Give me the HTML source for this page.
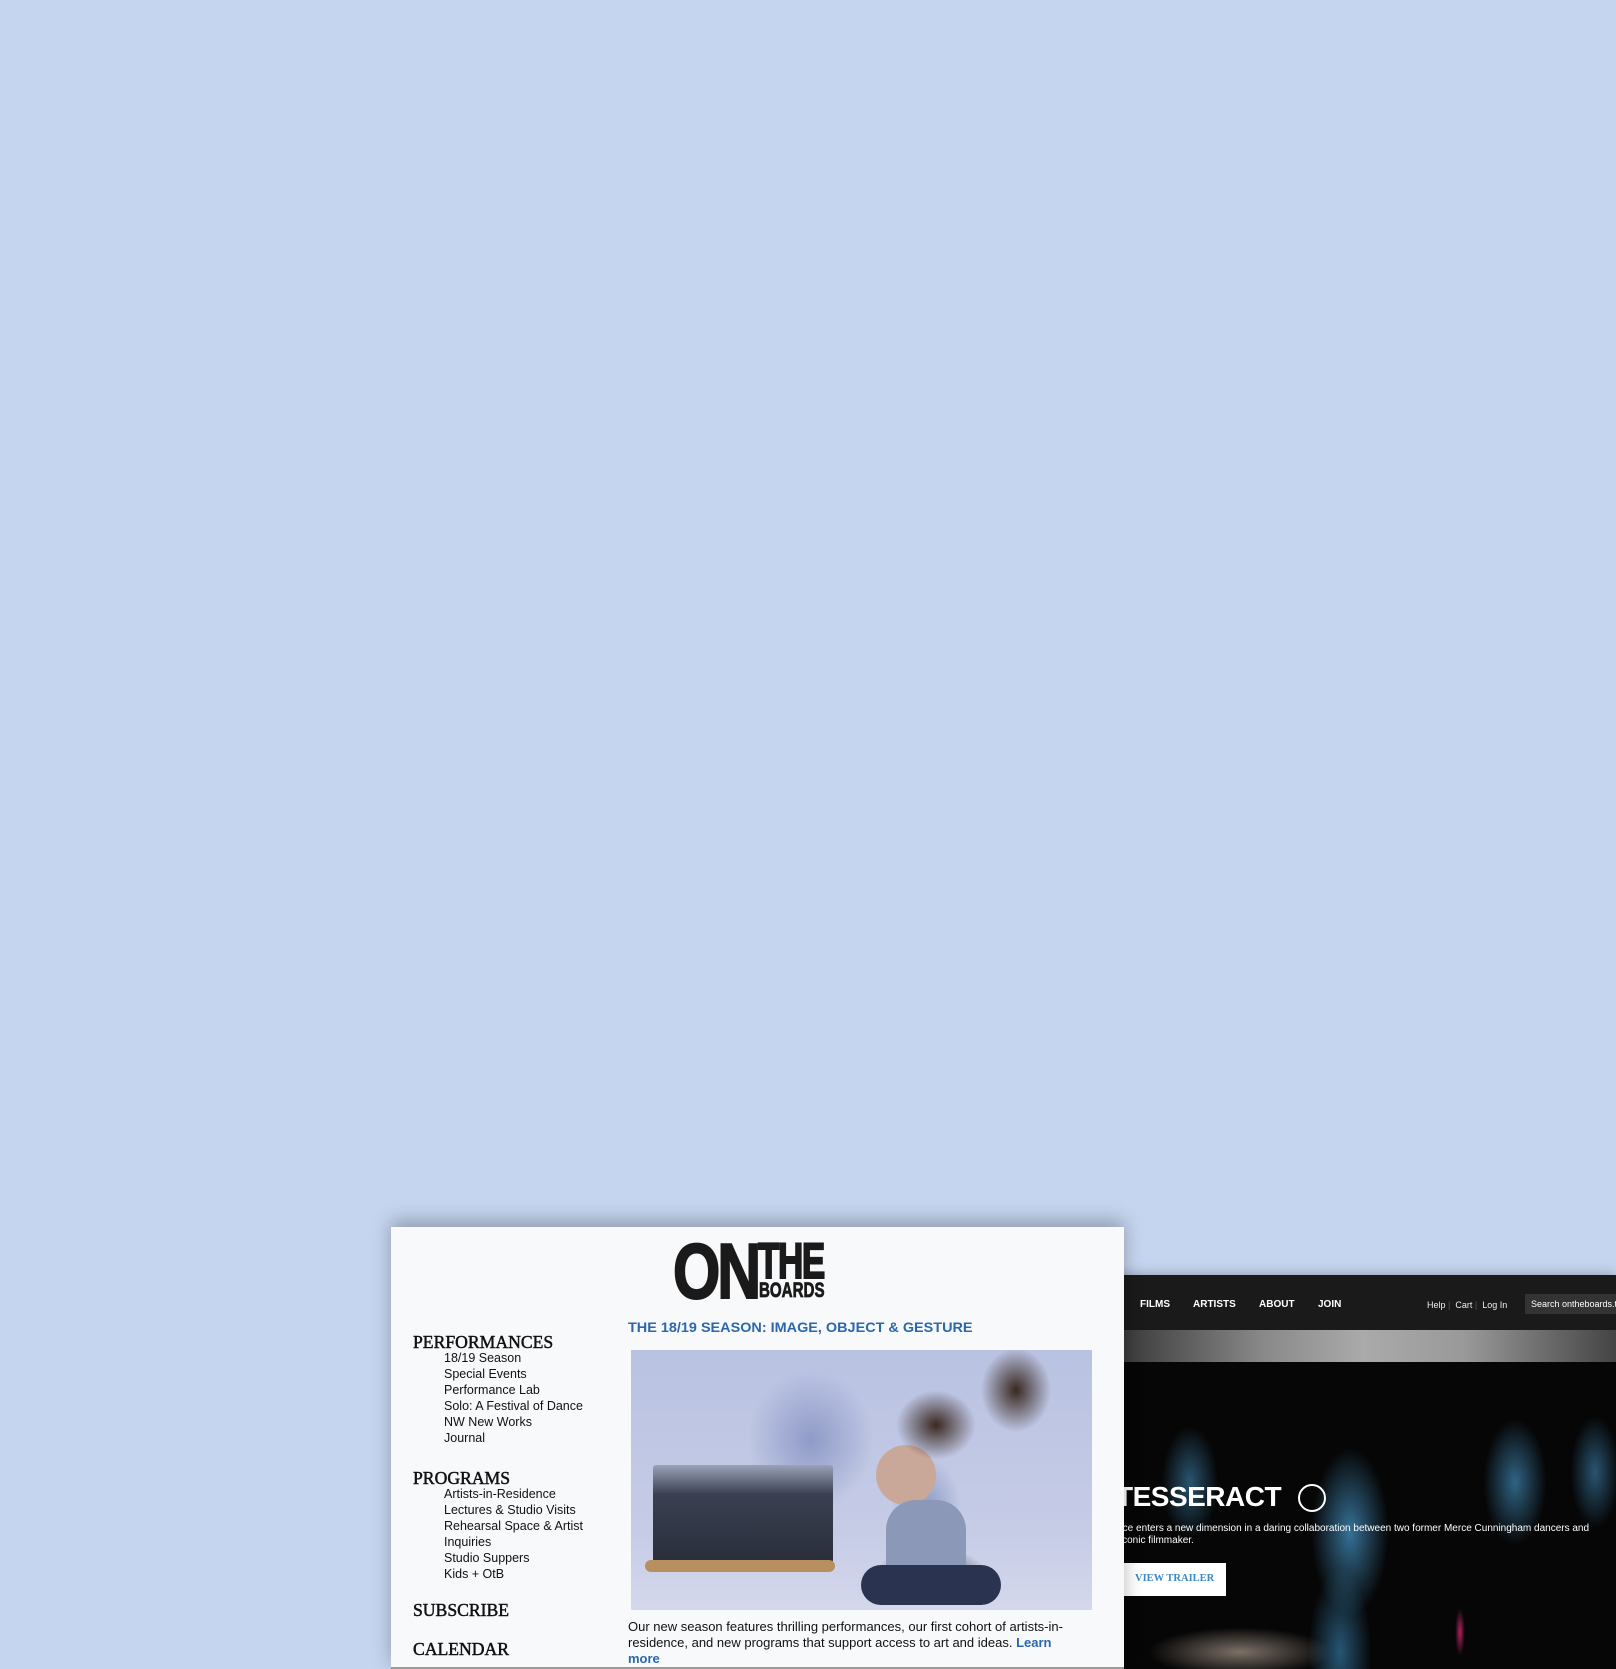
<!DOCTYPE html>
<html><head><meta charset="utf-8"><style>
*{margin:0;padding:0;box-sizing:border-box}
body{width:1616px;height:1669px;background:#c5d5ef;position:relative;overflow:hidden;font-family:"Liberation Sans",sans-serif}
.a{position:absolute}
#dark{left:1110px;top:1275px;width:506px;height:394px;background:#050505;box-shadow:0 0 12px rgba(0,0,0,.3);overflow:hidden}
#white{left:391px;top:1227px;width:733px;height:442px;background:#f8f9fb;box-shadow:0 -6px 18px rgba(0,0,0,.28);border-bottom:2px solid #999}
.nav{color:#fff;font-weight:bold;font-size:10px;top:24px}
.sm{color:#eee;font-size:9px;top:25px;white-space:nowrap}
.h{font-family:"Liberation Serif",serif;font-size:18px;color:#111;left:22px;-webkit-text-stroke:.5px #111;transform:scaleX(.98);transform-origin:left}
.li{left:53px;font-size:12.5px;color:#111;line-height:16px}
.lg{color:#1a1a1a;font-weight:bold;-webkit-text-stroke:2px #1a1a1a;transform-origin:left top;white-space:nowrap}
</style></head><body>
<div id="dark" class="a">
 <div class="a" style="left:0;top:0;width:506px;height:55px;background:#1a1a1a"></div>
 <div class="a nav" style="left:30px">FILMS</div>
 <div class="a nav" style="left:83px">ARTISTS</div>
 <div class="a nav" style="left:149px">ABOUT</div>
 <div class="a nav" style="left:208px">JOIN</div>
 <div class="a sm" style="left:317px">Help <span style="color:#555">|</span>&nbsp; Cart <span style="color:#555">|</span>&nbsp; Log In</div>
 <div class="a" style="left:415px;top:19px;width:100px;height:20px;background:#333;color:#fff;font-size:9px;padding:5px 6px;white-space:nowrap">Search ontheboards.tv</div>
 <div class="a" style="left:0;top:55px;width:506px;height:32px;background:linear-gradient(90deg,#333,#888 30%,#aaa 50%,#999 70%,#444)"></div>
 <div class="a" style="left:0;top:87px;width:506px;height:307px;background:
 radial-gradient(ellipse 55px 120px at 240px 170px,rgba(70,150,200,.75),transparent 70%),
 radial-gradient(ellipse 45px 90px at 405px 120px,rgba(70,150,200,.65),transparent 70%),
 radial-gradient(ellipse 40px 80px at 80px 120px,rgba(70,150,200,.55),transparent 70%),
 radial-gradient(ellipse 35px 80px at 485px 110px,rgba(70,150,200,.55),transparent 70%),
 radial-gradient(ellipse 45px 120px at 230px 290px,rgba(60,140,190,.6),transparent 70%),
 radial-gradient(ellipse 130px 35px at 130px 290px,rgba(220,200,180,.55),transparent 70%),
 radial-gradient(ellipse 6px 30px at 350px 270px,rgba(220,40,120,.8),transparent 80%),
 #060606"></div>
 <div class="a" style="left:6px;top:206px;color:#fff;font-weight:bold;font-size:28px;letter-spacing:-.5px">TESSERACT</div>
 <div class="a" style="left:188px;top:209px;width:28px;height:28px;border:2px solid #fff;border-radius:50%"></div>
 <div class="a" style="left:-4px;top:248px;color:#fff;font-size:10px;line-height:12px;white-space:nowrap">dance enters a new dimension in a daring collaboration between two former Merce Cunningham dancers and<br>an iconic filmmaker.</div>
 <div class="a" style="left:0;top:288px;width:116px;height:33px;background:#fff;color:#3a8ac8;font-family:'Liberation Serif',serif;font-weight:bold;font-size:10.5px;padding:10px 0 0 25px">VIEW TRAILER</div>
</div>
<div id="white" class="a">
 <div class="a lg" style="left:282px;top:12px;font-size:78px;line-height:64px;letter-spacing:-4px;transform:scaleX(.78)">ON</div>
 <div class="a lg" style="left:367px;top:14px;font-size:50px;line-height:40px;letter-spacing:-2px;transform:scaleX(.7)">THE</div>
 <div class="a lg" style="left:368px;top:56px;font-size:21px;line-height:16px;-webkit-text-stroke:.8px #1a1a1a;transform:scaleX(.72)">BOARDS</div>
 <div class="a" style="left:237px;top:92px;color:#2a67ad;font-weight:bold;font-size:14px;transform:scaleX(1.03);transform-origin:left">THE 18/19 SEASON: IMAGE, OBJECT &amp; GESTURE</div>
 <div class="a h" style="top:105px">PERFORMANCES</div>
 <div class="a li" style="top:123px">18/19 Season<br>Special Events<br>Performance Lab<br>Solo: A Festival of Dance<br>NW New Works<br>Journal</div>
 <div class="a h" style="top:241px">PROGRAMS</div>
 <div class="a li" style="top:259px">Artists-in-Residence<br>Lectures &amp; Studio Visits<br>Rehearsal Space &amp; Artist<br><span style="line-height:12px">Inquiries</span><br>Studio Suppers<br>Kids + OtB</div>
 <div class="a h" style="top:373px">SUBSCRIBE</div>
 <div class="a h" style="top:412px">CALENDAR</div>
 <div class="a" style="left:240px;top:123px;width:461px;height:260px;overflow:hidden;background:
 radial-gradient(ellipse 50px 75px at 295px 160px,#8a98c2,transparent 70%),
 radial-gradient(ellipse 80px 40px at 300px 225px,#2a3450,transparent 70%),
 radial-gradient(ellipse 50px 60px at 385px 40px,#3a2820,transparent 70%),
 radial-gradient(ellipse 90px 100px at 180px 90px,#8f9bc8,transparent 70%),
 linear-gradient(#b9c2e2,#c6cce6 70%,#d4d8ec)">
  <div class="a" style="left:245px;top:95px;width:60px;height:60px;border-radius:50%;background:#c9a89a"></div>
  <div class="a" style="left:265px;top:40px;width:80px;height:70px;border-radius:50%;background:radial-gradient(#3a2820,transparent 70%)"></div>
  <div class="a" style="left:255px;top:150px;width:80px;height:90px;background:#8c98b8;border-radius:30px 30px 6px 6px"></div>
  <div class="a" style="left:230px;top:215px;width:140px;height:40px;background:#2a3450;border-radius:20px"></div>
 </div>
 <div class="a" style="left:262px;top:238px;width:180px;height:98px;background:linear-gradient(#9aa2b8,#3a4052 30%,#2a2e3a);border-radius:3px"></div>
 <div class="a" style="left:254px;top:333px;width:190px;height:12px;background:#b89060;border-radius:6px"></div>
 <div class="a" style="left:237px;top:392px;font-size:13px;line-height:16px;color:#111;width:450px">Our new season features thrilling performances, our first cohort of artists-in-residence, and new programs that support access to art and ideas. <b style="color:#2a67ad">Learn more</b></div>
</div>
</body></html>
